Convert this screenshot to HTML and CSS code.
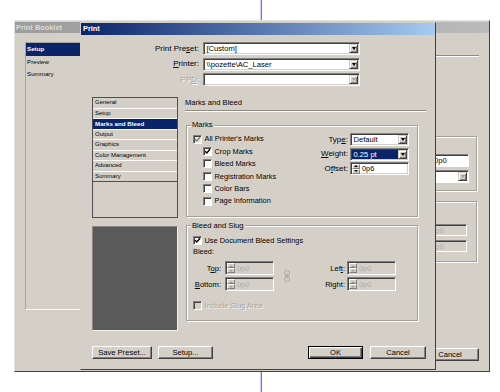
FILE: index.html
```html
<!DOCTYPE html>
<html lang="en">
<head>
<meta charset="utf-8">
<title>Print</title>
<link rel="stylesheet" href="styles.css">
</head>
<body>
<div class="desk">
  <div class="guide"></div>

  <section class="win back">
    <div class="title inactive">Print Booklet</div>
    <div class="back-body">
      <div class="back-list">
        <div class="bitem active">Setup</div>
        <div class="bitem">Preview</div>
        <div class="bitem">Summary</div>
      </div>
      <div class="back-right">
        <div class="etch back-sep"></div>
        <div class="bgroup bg1">
          <div class="bfield white bf1"><span class="val">0p0</span></div>
          <div class="bfield white bf1 bsel"><span class="val"></span><span class="drop dis"></span></div>
        </div>
        <div class="bgroup bg2">
          <div class="bfield dim bf3"><span class="val">0p0</span></div>
          <div class="bfield dim bf3"><span class="val">0p0</span></div>
        </div>
        <div class="btn bcancel">Cancel</div>
      </div>
    </div>
  </section>

  <section class="win front">
    <div class="title active">Print</div>
    <div class="front-body">
      <div class="presets">
        <span class="lbl">Print Pre<u>s</u>et:</span>
        <div class="select"><span class="val">[Custom]</span><span class="drop"></span></div>
        <span class="lbl"><u>P</u>rinter:</span>
        <div class="select"><span class="val">\\pozette\AC_Laser</span><span class="drop"></span></div>
        <span class="lbl dis">PP<u>D</u>:</span>
        <div class="select"><span class="val"></span><span class="drop dis"></span></div>
      </div>

      <div class="main">
        <div class="left-col">
          <div class="panels">
            <div class="pitem">General</div>
            <div class="pitem">Setup</div>
            <div class="pitem active">Marks and Bleed</div>
            <div class="pitem">Output</div>
            <div class="pitem">Graphics</div>
            <div class="pitem">Color Management</div>
            <div class="pitem">Advanced</div>
            <div class="pitem last">Summary</div>
          </div>
          <div class="preview"></div>
        </div>

        <div class="right-col">
          <div class="heading">Marks and Bleed</div>
          <div class="etch"></div>

          <fieldset class="group marks">
            <legend>Marks</legend>
            <div class="marks-grid">
              <div class="checks">
                <div class="chk"><span class="cb mixed"><svg width="7" height="7" viewBox="0 0 7 7"><path d="M1 3.2L2.8 5L6 1.3" fill="none" stroke="#858279" stroke-width="1.5"/></svg></span>All Printer's Marks</div>
                <div class="chk sub"><span class="cb"><svg width="7" height="7" viewBox="0 0 7 7"><path d="M1 3.2L2.8 5L6 1.3" fill="none" stroke="#000" stroke-width="1.5"/></svg></span>Crop Marks</div>
                <div class="chk sub"><span class="cb"></span>Bleed Marks</div>
                <div class="chk sub"><span class="cb"></span>Registration Marks</div>
                <div class="chk sub"><span class="cb"></span>Color Bars</div>
                <div class="chk sub"><span class="cb"></span>Page Information</div>
              </div>
              <div class="opts">
                <span class="lbl">Typ<u>e</u>:</span>
                <div class="select"><span class="val">Default</span><span class="drop"></span></div>
                <span class="lbl"><u>W</u>eight:</span>
                <div class="select hl"><span class="val">0.25 pt</span><span class="drop"></span></div>
                <span class="lbl">O<u>f</u>fset:</span>
                <div class="field white"><span class="spin"><i class="up"></i><i class="dn"></i></span><span class="val">0p6</span></div>
              </div>
            </div>
          </fieldset>

          <fieldset class="group bleed">
            <legend>Bleed and Slug</legend>
            <div class="chk"><span class="cb"><svg width="7" height="7" viewBox="0 0 7 7"><path d="M1 3.2L2.8 5L6 1.3" fill="none" stroke="#000" stroke-width="1.5"/></svg></span>Use Document Bleed Settings</div>
            <div class="row-text">Bleed:</div>
            <div class="bleed-grid">
              <span class="lbl">T<u>o</u>p:</span>
              <div class="field dim"><span class="spin off"><i class="up"></i><i class="dn"></i></span><span class="val">0p0</span></div>
              <span class="link"><svg width="6" height="12" viewBox="0 0 6 12"><g fill="none" stroke="#aaa69e"><rect x="0.5" y="0.5" width="5" height="5" rx="2.2"/><rect x="0.5" y="6.5" width="5" height="5" rx="2.2"/></g><path d="M3 3.5V8.5" stroke="#aaa69e"/></svg></span>
              <span class="lbl r">Lef<u>t</u>:</span>
              <div class="field dim"><span class="spin off"><i class="up"></i><i class="dn"></i></span><span class="val">0p0</span></div>
              <span class="lbl"><u>B</u>ottom:</span>
              <div class="field dim"><span class="spin off"><i class="up"></i><i class="dn"></i></span><span class="val">0p0</span></div>
              <span class="lbl r">Ri<u>g</u>ht:</span>
              <div class="field dim"><span class="spin off"><i class="up"></i><i class="dn"></i></span><span class="val">0p0</span></div>
            </div>
            <div class="chk dis slug"><span class="cb off"></span>Include Slug Area</div>
          </fieldset>
        </div>
      </div>

      <div class="buttons">
        <div class="btn w60">Save Preset...</div>
        <div class="btn w55">Setup...</div>
        <div class="spacer"></div>
        <div class="btn default w55">OK</div>
        <div class="btn w56 cancel">Cancel</div>
      </div>
    </div>
  </section>
</div>
</body>
</html>
```

FILE: styles.css
```css
* { box-sizing: border-box; margin: 0; padding: 0; }
html, body { width: 500px; height: 392px; overflow: hidden; background: #fff; }
body {
  font-family: "Liberation Sans", Arial, Helvetica, sans-serif;
  font-size: 7.6px;
  line-height: 1;
  color: #000;
}
.desk { position: relative; width: 500px; height: 392px; background: #fff; }
.guide {
  position: absolute; left: 260px; top: 0; width: 2px; height: 392px;
  border-left: 1px solid #d8c4f6; border-right: 1px solid #9a5ff0;
}

/* windows */
.win { position: absolute; background: #d4d0c8; display: flex; flex-direction: column; }
.back {
  left: 14px; top: 20px; width: 476px; height: 352px; padding-top: 1px;
  border: 1px solid; border-color: #e6e4df #404040 #404040 #e6e4df;
}
.front {
  left: 80px; top: 22px; width: 356px; height: 348px;
  border: 1px solid; border-color: #d4d0c8 #404040 #404040 #d4d0c8;
}
.title {
  flex: none; height: 12px; line-height: 12px; padding-left: 2px;
  font-weight: bold; font-size: 7.4px; color: #fff; white-space: nowrap;
}
.title.active { background: linear-gradient(90deg, #0a246a, #a6caf0); }
.title.inactive {
  height: 11px; line-height: 11px; padding-left: 1px;
  background: linear-gradient(90deg, #9d9d9d, #bababa); color: #dedbd5;
}

/* back dialog */
.back-body { flex: 1; display: flex; padding: 9px 10px 0 10px; }
.back-list {
  width: 90px; height: 268px;
  border: 1px solid; border-color: #a8a49c #fbfaf8 #fbfaf8 #a8a49c;
}
.bitem { height: 12.5px; line-height: 12.5px; padding-left: 1px; font-size: 6.2px; }
.bitem.active { background: #0a246a; color: #fff; font-weight: bold; }
.back-right { margin-left: auto; width: 79px; display: flex; flex-direction: column; align-items: flex-end; }
.etch { height: 2px; border-top: 1px solid #8f8c86; border-bottom: 1px solid #fff; width: 100%; }
.back-sep { margin-top: 13px; }
.bgroup {
  width: 77px; margin-right: 2px; display: flex; flex-direction: column; align-items: flex-end;
  border: 1px solid #a3a09a; box-shadow: 1px 1px 0 #fff, inset 1px 1px 0 #fff;
}
.bg1 { margin-top: 79px; height: 55px; padding: 17px 7px 0 0; gap: 3px; }
.bg2 { margin-top: 10px; height: 61px; padding: 22px 9px 0 0; gap: 4px; }
.bfield {
  display: flex; align-items: center; padding: 1px;
  border: 1px solid; border-color: #808080 #fff #fff #808080;
  box-shadow: inset 1px 1px 0 #404040;
}
.bfield.white { background: #fff; }
.bfield.dim { background: #d4d0c8; color: #b0ada6; }
.bf1 { width: 40px; height: 13px; padding-left: 4px; }
.bf3 { width: 44px; height: 12px; padding-left: 7px; }
.bfield .val { flex: 1; line-height: 9px; }
.bcancel { margin-top: 86px; width: 58px; }

/* front dialog */
.front-body { flex: 1; display: flex; flex-direction: column; padding: 7px 9px 0 11px; }
.presets {
  display: grid; grid-template-columns: 107px 157px; column-gap: 4px; row-gap: 2.5px;
  grid-auto-rows: 13px; align-items: center;
}
.lbl { text-align: right; white-space: nowrap; font-size: 8px; }
.dis { color: #a8a59e; text-shadow: 1px 1px 0 rgba(255,255,255,0.8); }

.select, .field {
  height: 13px; display: flex; align-items: center; padding: 1px;
  background: #fff;
  border: 1px solid; border-color: #808080 #fff #fff #808080;
  box-shadow: inset 1px 1px 0 #404040, inset -1px -1px 0 #d4d0c8;
  white-space: nowrap; overflow: hidden;
}
.select .val { flex: 1; height: 9px; line-height: 9px; padding-left: 1.5px; font-size: 7.6px; }
.select.hl .val { background: #0a246a; color: #fff; }
.drop {
  flex: none; width: 9px; height: 9px;
  background: #d4d0c8;
  border: 1px solid; border-color: #d4d0c8 #404040 #404040 #d4d0c8;
  box-shadow: inset 1px 1px 0 #fff, inset -1px -1px 0 #808080;
  display: flex; align-items: center; justify-content: center;
}
.drop::after {
  content: ""; border-left: 2.5px solid transparent; border-right: 2.5px solid transparent;
  border-top: 3px solid #000;
}
.drop.dis::after { border-top-color: #a3a09a; }

.field .val { flex: 1; line-height: 9px; padding-left: 2px; font-size: 7.4px; }
.field.dim { background: #d4d0c8; height: 14px; }
.field.dim .val { color: #b0ada6; }
.spin { flex: none; width: 8px; height: 10px; display: flex; flex-direction: column; }
.spin i {
  flex: 1; display: flex; align-items: center; justify-content: center;
  background: #d4d0c8;
  border: 1px solid; border-color: #fff #808080 #808080 #fff;
}
.spin i.up::after { content: ""; border-left: 2px solid transparent; border-right: 2px solid transparent; border-bottom: 2px solid #000; }
.spin i.dn::after { content: ""; border-left: 2px solid transparent; border-right: 2px solid transparent; border-top: 2px solid #000; }
.spin.off i.up::after { border-bottom-color: #a3a09a; }
.spin.off i.dn::after { border-top-color: #a3a09a; }

.main {
  display: grid; grid-template-columns: 86px 241px; column-gap: 7px;
  margin-top: 11px; align-items: start;
}
.panels { height: 121px; border: 1px solid #505050; }
.pitem {
  height: 10.5px; line-height: 9.5px; padding-left: 2px; font-size: 6px;
  border-bottom: 1px solid #fbfaf7; white-space: nowrap;
}
.pitem.active { background: #0a246a; color: #fff; font-weight: bold; font-size: 6.2px; }
.pitem.last { border-bottom-color: #505050; }
.preview {
  margin-top: 8px; height: 105px; background: #5a5a5a;
  border: 1px solid; border-color: #8a8781 #f2f1ee #f2f1ee #8a8781;
}

.heading { height: 11px; line-height: 11px; font-size: 7.6px; white-space: nowrap; }
.right-col .etch { margin-top: 2px; }

.group {
  border: 1px solid #a3a09a; box-shadow: 1px 1px 0 #fff, inset 1px 1px 0 #fff;
  margin: 9px 8px 0 1px; padding: 4px 8px 9px 6px; min-width: 0;
}
.group legend {
  font-size: 7.6px; line-height: 8px; padding: 0 1px; margin-left: -2px;
  background: #d4d0c8;
}
.bleed { margin-top: 4.5px; padding-top: 4.5px; }

.marks-grid { display: flex; }
.checks { flex: 1; }
.chk { display: flex; align-items: center; height: 12.4px; font-size: 7.4px; gap: 2.5px; white-space: nowrap; }
.chk.sub { margin-left: 10px; }
.cb {
  flex: none; width: 9px; height: 9px; background: #fff;
  border: 1px solid; border-color: #808080 #fff #fff #808080;
  box-shadow: inset 1px 1px 0 #404040;
  display: flex; align-items: center; justify-content: center;
}
.cb svg { display: block; }
.cb.mixed { background: #ebe9e4; }
.cb.off { background: #d4d0c8; }

.opts {
  display: grid; grid-template-columns: auto 59px; column-gap: 2px; row-gap: 1.5px;
  grid-auto-rows: 13px; align-items: center;
}

.row-text { height: 12px; line-height: 12px; font-size: 7.4px; }
.bleed .chk { height: 12px; }
.bleed-grid {
  display: grid; grid-template-columns: 32px 49px 26px 47px 49px;
  grid-template-rows: 14px 14px; row-gap: 2px; margin-top: 3px; align-items: center;
}
.bleed-grid .lbl { padding-right: 4px; font-size: 7.6px; }
.bleed-grid .lbl.r { padding-right: 2px; }
.link { grid-row: span 2; display: flex; justify-content: center; align-items: center; }
.link svg { display: block; }
.bleed .slug { margin-top: 8px; }

.buttons { display: flex; margin-top: 15px; gap: 6px; }
.btn {
  height: 13px; display: flex; align-items: center; justify-content: center;
  font-size: 7.6px; white-space: nowrap; background: #d4d0c8;
  border: 1px solid; border-color: #fff #404040 #404040 #fff;
  box-shadow: inset -1px -1px 0 #808080;
}
.btn.default {
  border-color: #000;
  box-shadow: inset 1px 1px 0 #fff, inset -1px -1px 0 #404040, inset -2px -2px 0 #808080;
}
.w60 { width: 60px; }
.w55 { width: 55px; }
.w56 { width: 56px; }
.cancel { margin-left: 1px; }
.spacer { flex: 1; }
```
